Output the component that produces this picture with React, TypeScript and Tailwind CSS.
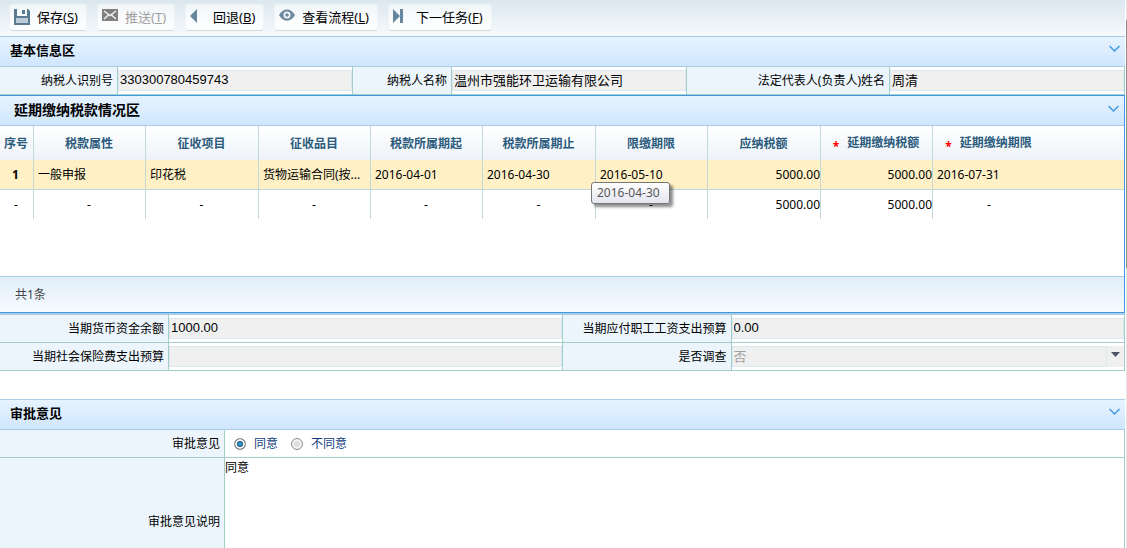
import React from 'react';

interface ToolButtonProps {
  label: string;
  accessKey: string;
  disabled?: boolean;
  children: React.ReactNode;
}

interface SectionHeaderProps {
  title: string;
  large?: boolean;
}

interface FieldProps {
  id: string;
  label: string;
  value: string;
  underline?: boolean;
}

interface TaxRow {
  no: string;
  attribute: string;
  item: string;
  subItem: string;
  periodStart: string;
  periodEnd: string;
  deadline: string;
  payable: string;
  deferred: string;
  deferredUntil: string;
}

const columns = [
  { title: '序号' },
  { title: '税款属性' },
  { title: '征收项目' },
  { title: '征收品目' },
  { title: '税款所属期起' },
  { title: '税款所属期止' },
  { title: '限缴期限' },
  { title: '应纳税额' },
  { title: '延期缴纳税额', required: true },
  { title: '延期缴纳期限', required: true },
];

const taxRow: TaxRow = {
  no: '1',
  attribute: '一般申报',
  item: '印花税',
  subItem: '货物运输合同(按...',
  periodStart: '2016-04-01',
  periodEnd: '2016-04-30',
  deadline: '2016-05-10',
  payable: '5000.00',
  deferred: '5000.00',
  deferredUntil: '2016-07-31',
};

const labelClass =
  'flex items-center justify-end border-r border-[#a3cdc8] bg-[#edf5fc] pr-1';
const cellClass = 'flex items-center border-r border-[#a3cdc8]';
const inputClass =
  "h-[21px] w-full min-w-0 border border-[#dbe8ef] bg-[#f0f0f0] px-px pb-[2px] font-['Liberation_Sans','Noto_Sans_CJK_SC',sans-serif] text-[13px] text-black outline-none";

const App: React.FC = () => {
  return (
    <div className="flex h-screen overflow-hidden bg-white font-['Noto_Sans','Noto_Sans_CJK_SC',sans-serif] text-[12px] leading-4 text-black">
      <main className="min-w-0 flex-1">
        <Toolbar />

        <SectionHeader title="基本信息区" />
        <div className="grid h-7 grid-cols-[118px_1fr_99px_1fr_203px_1fr] border-b border-[#a3cdc8]">
          <Field id="taxpayerId" label="纳税人识别号" value="330300780459743" />
          <Field
            id="taxpayerName"
            label="纳税人名称"
            value="温州市强能环卫运输有限公司"
          />
          <Field id="legalPerson" label="法定代表人(负责人)姓名" value="周清" />
        </div>

        <section className="border-y border-r border-[#3f97dd]">
          <SectionHeader title="延期缴纳税款情况区" large />
          <TaxTable />
          <div className="flex h-9 items-center border-t border-[#a9cbe4] bg-linear-to-b from-[#e0eefa] to-[#f7fbff] pl-[15px] text-[#444]">
            共1条
          </div>
        </section>

        <div className="grid auto-rows-[28px] grid-cols-[169px_1fr_169px_1fr] border-t-2 border-[#a9cbe4]">
          <Field id="cashBalance" label="当期货币资金余额" value="1000.00" underline />
          <Field
            id="wageBudget"
            label="当期应付职工工资支出预算"
            value="0.00"
            underline
          />
          <Field id="insurance" label="当期社会保险费支出预算" value="" underline />
          <label
            htmlFor="investigate"
            className={`${labelClass} border-b`}
          >
            是否调查
          </label>
          <div className={`${cellClass} relative border-b`}>
            <select
              id="investigate"
              disabled
              className="h-[21px] w-full appearance-none border border-[#dbe8ef] bg-[#f0f0f0] px-px pb-[2px] text-[13px] leading-4 text-[#a0a0a0] opacity-100"
            >
              <option>否</option>
            </select>
            <span className="pointer-events-none absolute right-0 flex h-[21px] w-[18px] items-center justify-center border-l border-[#dbe8ef] bg-[#f0f0f0] pb-1">
              <svg width="9" height="5" viewBox="0 0 9 5" fill="#4c5468">
                <path d="M0 0h9L4.500 5z" />
              </svg>
            </span>
          </div>
        </div>

        <div className="mt-7">
          <SectionHeader title="审批意见" />
        </div>
        <div className="grid grid-cols-[225px_1fr] grid-rows-[28px_128px]">
          <div id="opinion" className={`${labelClass} border-b`}>
            审批意见
          </div>
          <div
            role="radiogroup"
            aria-labelledby="opinion"
            className={`${cellClass} gap-[13px] border-b pl-[9px] text-[#123c82]`}
          >
            <RadioOption label="同意" defaultChecked />
            <RadioOption label="不同意" />
          </div>
          <label htmlFor="remark" className={labelClass}>
            审批意见说明
          </label>
          <div className={cellClass}>
            <textarea
              id="remark"
              defaultValue="同意"
              className="h-full w-full resize-none pt-[2px] outline-none"
            />
          </div>
        </div>
      </main>

      {/* page scrollbar */}
      <div className="w-[2px] border-l border-white bg-[#e4e4e4] pt-5">
        <div className="h-[248px] bg-[#8c8c8c]" />
      </div>
    </div>
  );
};

const Toolbar: React.FC = () => {
  return (
    <div className="flex h-9 gap-[10px] bg-linear-to-b from-[#dce7ef] to-[#f6f9fc] pt-1 pl-[9px]">
      <ToolButton label="保存" accessKey="S">
        <path d="M0 0h14l2 2v14H0z" fill="#5b7b92" />
        <path d="M3 0h10v7H3z" fill="#f4f9fc" />
        <path d="M8 1h3v4H8z" fill="#5b7b92" />
        <path d="M2 9h12v5H2z" fill="#b9ccd8" />
      </ToolButton>
      <ToolButton label="推送" accessKey="T" disabled>
        <path d="M0 0h16v12H0z" fill="#808080" />
        <path
          d="M2 2l6 4.500L14 2M2 10l4.500-4M14 10L9.500 6"
          fill="none"
          stroke="#f0f0f0"
          strokeWidth="1.500"
        />
      </ToolButton>
      <ToolButton label="回退" accessKey="B">
        <path d="M7 0v14L0 7z" fill="#64879f" />
      </ToolButton>
      <ToolButton label="查看流程" accessKey="L">
        <path
          d="M0 6C4-1.500 12-1.500 16 6C12 13.500 4 13.500 0 6z"
          fill="#6b889d"
        />
        <circle cx="8" cy="6" r="3.500" fill="#f4f8fb" />
        <circle cx="8" cy="6" r="1.800" fill="#6b889d" />
      </ToolButton>
      <ToolButton label="下一任务" accessKey="F">
        <path d="M0 0l7 7l-7 7zM7 0h3v14H7z" fill="#64879f" />
      </ToolButton>
    </div>
  );
};

const ToolButton: React.FC<ToolButtonProps> = ({
  label,
  accessKey,
  disabled,
  children,
}) => {
  return (
    <button
      type="button"
      accessKey={accessKey}
      disabled={disabled}
      className="flex h-[27px] items-center gap-[7px] rounded-sm border border-[#eef3f6] border-b-[#d3d9dd] bg-linear-to-b from-[#f1f6f9] to-white pr-2 pb-px pl-1 text-[13px] whitespace-nowrap disabled:text-[#a0a0a0]"
    >
      <svg width="16" height="16" viewBox="0 0 16 16">
        {children}
      </svg>
      <span>
        {label}(<span className="underline">{accessKey}</span>)
      </span>
    </button>
  );
};

const SectionHeader: React.FC<SectionHeaderProps> = ({ title, large }) => {
  return (
    <div
      className={
        large
          ? 'flex h-[30px] items-center justify-between border-b border-[#a9cbe4] bg-linear-to-b from-[#e7f3ff] to-[#cfe6fd] pr-[5px] pb-px pl-[14px] text-[14px]'
          : 'flex h-[31px] items-center justify-between border-y border-[#a9cbe4] bg-linear-to-b from-[#e7f3ff] to-[#cfe6fd] pr-[5px] pb-[3px] pl-[10px] text-[13px]'
      }
    >
      <h2 className="font-bold">{title}</h2>
      <svg
        width="11"
        height="10"
        viewBox="0 0 11 10"
        fill="none"
        stroke="#3f9be3"
        strokeWidth="1.500"
      >
        <path d="M.5 1l5 5l5-5" />
      </svg>
    </div>
  );
};

const Field: React.FC<FieldProps> = ({ id, label, value, underline }) => {
  return (
    <>
      <label
        htmlFor={id}
        className={underline ? `${labelClass} border-b` : labelClass}
      >
        {label}
      </label>
      <div className={underline ? `${cellClass} border-b` : cellClass}>
        <input id={id} readOnly defaultValue={value} className={inputClass} />
      </div>
    </>
  );
};

const TaxTable: React.FC = () => {
  const line = 'border-r border-[#bfdad8]';
  const text = `${line} whitespace-nowrap pl-1`;
  return (
    <div className="relative h-[150px]">
      <table className="w-full table-fixed border-separate border-spacing-0">
        <colgroup>
          <col className="w-[34px]" />
          <col className="w-[112px]" />
          <col className="w-[113px]" />
          <col className="w-[112px]" />
          <col className="w-[112px]" />
          <col className="w-[113px]" />
          <col className="w-[112px]" />
          <col className="w-[113px]" />
          <col className="w-[112px]" />
          <col className="w-[112px]" />
          <col />
        </colgroup>
        <thead>
          <tr className="h-[34px] bg-linear-to-b from-white to-[#eef3f8] text-[#2b5b7c]">
            {columns.map((column, index) => (
              <th
                key={column.title}
                className={
                  index < 9
                    ? `${line} pt-[2px] pr-px whitespace-nowrap`
                    : 'pt-[2px] pr-px whitespace-nowrap'
                }
              >
                {column.required && (
                  <span className="mr-2 align-sub leading-none text-[#f00]">*</span>
                )}
                {column.title}
              </th>
            ))}
            <th />
          </tr>
        </thead>
        <tbody>
          <tr className="h-[30px] bg-[#fff0c6] *:border-b *:border-b-[#bfd6dc]">
            <td className={`${line} pr-[2px] text-center font-bold`}>{taxRow.no}</td>
            <td className={text}>{taxRow.attribute}</td>
            <td className={text}>{taxRow.item}</td>
            <td className={text}>{taxRow.subItem}</td>
            <td className={text}>{taxRow.periodStart}</td>
            <td className={text}>{taxRow.periodEnd}</td>
            <td className={text}>{taxRow.deadline}</td>
            <td className={`${line} text-right`}>{taxRow.payable}</td>
            <td className={`${line} text-right`}>{taxRow.deferred}</td>
            <td className="pl-1">{taxRow.deferredUntil}</td>
            <td />
          </tr>
          <tr className="h-[29px] text-center">
            {['-', '-', '-', '-', '-', '-', '-'].map((value, index) => (
              <td key={index} className={`${line} pr-px`}>
                {value}
              </td>
            ))}
            <td className={`${line} text-right`}>5000.00</td>
            <td className={`${line} text-right`}>5000.00</td>
            <td>-</td>
            <td />
          </tr>
        </tbody>
      </table>
      <div
        role="tooltip"
        className="absolute top-14 left-[591px] flex h-[22px] w-[79px] items-center rounded-[3px] border border-[#767676] bg-linear-to-b from-white to-[#e4e5f0] px-[5px] text-[#575757] shadow-[3px_3px_3px_rgba(0,0,0,0.45)]"
      >
        2016-04-30
      </div>
    </div>
  );
};

const RadioOption: React.FC<{ label: string; defaultChecked?: boolean }> = ({
  label,
  defaultChecked,
}) => {
  return (
    <label className="flex items-center gap-2">
      <input
        type="radio"
        name="opinion"
        defaultChecked={defaultChecked}
        className="size-3 appearance-none rounded-full border border-[#8e8f8f] bg-[#dcdfe2] shadow-[inset_0_0_0_2px_#f4f4f4] checked:bg-radial checked:from-[#2fa5dc] checked:from-10% checked:to-[#15395c] checked:to-50%"
      />
      {label}
    </label>
  );
};

export default App;
